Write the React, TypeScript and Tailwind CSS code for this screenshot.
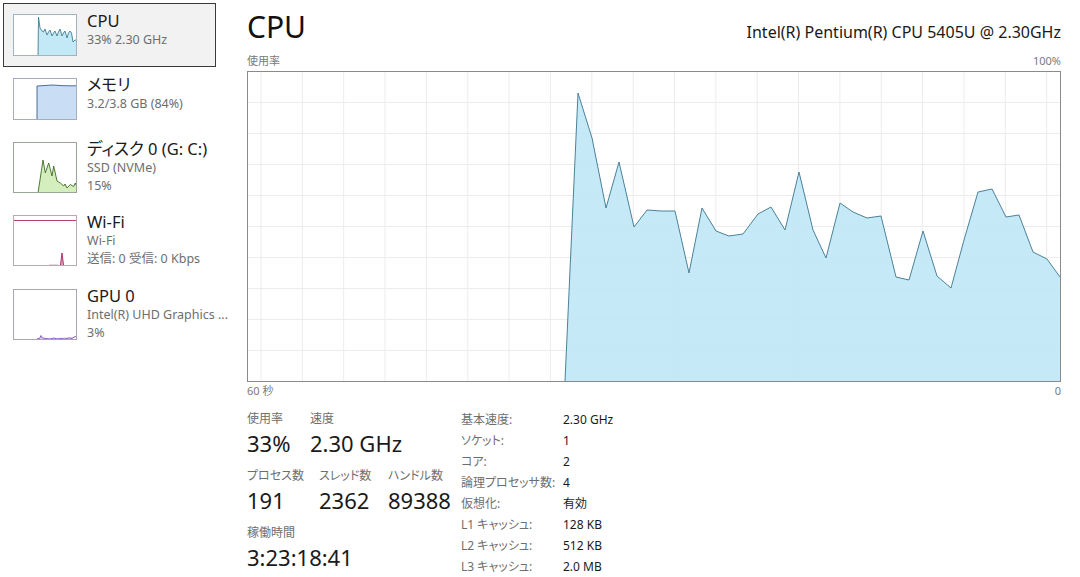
import React from "react";

const FONT = '"Noto Sans", "Noto Sans CJK JP", sans-serif';

// CPU usage history, in chart pixels (812 x 309 inner area)
const cpuPoints: [number, number][] = [
  [317, 309], [330, 21], [344, 66], [358, 136], [371, 90], [386, 155],
  [399, 138], [413, 139], [427, 139], [441, 201], [454, 136], [468, 159],
  [481, 164], [495, 162], [510, 142], [523, 135], [537, 158], [551, 100],
  [565, 158], [578, 186], [592, 131], [605, 140], [619, 146], [633, 144],
  [648, 205], [661, 208], [675, 159], [689, 204], [703, 216], [716, 168],
  [730, 120], [744, 117], [758, 145], [771, 143], [785, 180], [799, 187],
  [812, 205]
];

function CpuChart() {
  const line = cpuPoints.map(p => p.join(",")).join(" ");
  const area = `${line} 812,309`;
  const vLines = Array.from({ length: 20 }, (_, i) => 13 + i * 41.35);
  const hLines = Array.from({ length: 9 }, (_, i) => 31 * (i + 1) - 1);
  return (
    <svg width="812" height="309" viewBox="0 0 812 309" className="block">
      {vLines.map(x => (
        <line key={x} x1={x} y1={0} x2={x} y2={309} stroke="#ececec" strokeWidth="1" />
      ))}
      {hLines.map(y => (
        <line key={y} x1={0} y1={y + 0.5} x2={812} y2={y + 0.5} stroke="#ececec" strokeWidth="1" />
      ))}
      <polygon points={area} fill="#bfe7f6" fillOpacity="0.9" />
      <polyline points={line} fill="none" stroke="#4a8299" strokeWidth="1" strokeLinejoin="round" />
    </svg>
  );
}

function Thumb({
  h,
  border,
  children
}: {
  h: number;
  border: string;
  children: React.ReactNode;
}) {
  return (
    <svg
      width="64"
      height={h}
      viewBox={`0 0 64 ${h}`}
      className="block shrink-0 mt-[3px] bg-white"
    >
      {children}
      <rect x="0.5" y="0.5" width="63" height={h - 1} fill="none" stroke={border} />
    </svg>
  );
}

function SideItem({
  title,
  lines,
  thumb,
  selected,
  height
}: {
  title: string;
  lines: string[];
  thumb: React.ReactNode;
  selected?: boolean;
  height: string;
}) {
  return (
    <div
      className={
        selected
          ? `flex w-[213px] ${height} border border-[#3a3a3a] bg-[#f2f2f2] pl-[9px] pt-[7px]`
          : `flex w-[213px] ${height} border border-transparent pl-[9px] pt-[7px]`
      }
    >
      {thumb}
      <div className="ml-[10px] flex flex-col whitespace-nowrap">
        <div className="text-[16.5px] leading-[20px] text-[#1a1a1a]">{title}</div>
        {lines.map(l => (
          <div key={l} className="text-[12.5px] leading-[18px] text-[#6e6e6e]">
            {l}
          </div>
        ))}
      </div>
    </div>
  );
}

function Stat({ label, value, w }: { label: string; value: string; w: string }) {
  return (
    <div className={`${w} flex flex-col`}>
      <div className="text-[12px] leading-[18px] text-[#6e6e6e] whitespace-nowrap">{label}</div>
      <div className="text-[22px] leading-[30px] text-[#1a1a1a] whitespace-nowrap">{value}</div>
    </div>
  );
}

const details: [string, string][] = [
  ["基本速度:", "2.30 GHz"],
  ["ソケット:", "1"],
  ["コア:", "2"],
  ["論理プロセッサ数:", "4"],
  ["仮想化:", "有効"],
  ["L1 キャッシュ:", "128 KB"],
  ["L2 キャッシュ:", "512 KB"],
  ["L3 キャッシュ:", "2.0 MB"]
];

export default function App() {
  return (
    <div
      className="flex w-[1080px] h-[577px] bg-white overflow-hidden [font-feature-settings:'palt']"
      style={{ fontFamily: FONT }}
    >
      {/* Sidebar */}
      <div className="w-[220px] shrink-0 flex flex-col pt-[3px] pl-[3px]">
        <SideItem
          selected
          height="h-[64px]"
          title="CPU"
          lines={["33%  2.30 GHz"]}
          thumb={
            <Thumb h={42} border="#9fb4bf">
              <polygon
                points="25,42 25.5,3 27,14 29,17 30.5,18 32,15 34,21 35.5,18 37,16 39,22 40.5,19 42,17 44,22 45.5,18 47,15 49,22 50.5,19 52,17 54,24 55.5,19 57,17 58.5,19 60,28 62,26 63,26 63,42"
                fill="#c3e8f6"
              />
              <polyline
                points="25,42 25.5,3 27,14 29,17 30.5,18 32,15 34,21 35.5,18 37,16 39,22 40.5,19 42,17 44,22 45.5,18 47,15 49,22 50.5,19 52,17 54,24 55.5,19 57,17 58.5,19 60,28 62,26 63,26"
                fill="none"
                stroke="#3f7f95"
                strokeWidth="0.9"
              />
            </Thumb>
          }
        />
        <SideItem
          height="h-[64px]"
          title="メモリ"
          lines={["3.2/3.8 GB (84%)"]}
          thumb={
            <Thumb h={42} border="#a3adbd">
              <polygon points="24,42 24,8 32,7.5 40,7 48,7.6 56,7.8 63,7.8 63,42" fill="#c9ddf5" />
              <polyline
                points="24,42 24,8 32,7.5 40,7 48,7.6 56,7.8 63,7.8"
                fill="none"
                stroke="#3d5f8a"
                strokeWidth="0.9"
              />
            </Thumb>
          }
        />
        <SideItem
          height="h-[73px]"
          title="ディスク 0 (G: C:)"
          lines={["SSD (NVMe)", "15%"]}
          thumb={
            <Thumb h={51} border="#9aa597">
              <polygon
                points="25,51 30,18 32.3,31 35.7,21 39,34 40.7,24 44,39 47.3,41 50.7,44 52,42 54,46 57.3,42.5 60.7,44.5 62.3,41 63,43 63,51"
                fill="#d4efbd"
              />
              <polyline
                points="25,51 30,18 32.3,31 35.7,21 39,34 40.7,24 44,39 47.3,41 50.7,44 52,42 54,46 57.3,42.5 60.7,44.5 62.3,41 63,43"
                fill="none"
                stroke="#3e6b22"
                strokeWidth="0.9"
              />
            </Thumb>
          }
        />
        <SideItem
          height="h-[74px]"
          title="Wi-Fi"
          lines={["Wi-Fi", "送信: 0  受信: 0 Kbps"]}
          thumb={
            <Thumb h={51} border="#b8a9b2">
              <line x1="1" y1="5.5" x2="63" y2="5.5" stroke="#b2436e" strokeWidth="1" />
              <polygon points="47.5,50 49,38 50.5,50" fill="#e8a3c0" />
              <polyline points="47.5,50 49,38 50.5,50" fill="none" stroke="#a8205a" strokeWidth="0.9" />
              <line x1="36" y1="50" x2="45" y2="50" stroke="#b9a2ad" strokeWidth="0.8" />
            </Thumb>
          }
        />
        <SideItem
          height="h-[74px]"
          title="GPU 0"
          lines={["Intel(R) UHD Graphics ...", "3%"]}
          thumb={
            <Thumb h={51} border="#a9a7b6">
              <polyline
                points="24,50 27,49 28,46.5 29.5,49 33,49.5 37,50 41,49 44,50 48,49.5 52,50 56,49 59,49.5 62,47.5 63,48"
                fill="#d8c8ee"
                stroke="#8a4fc0"
                strokeWidth="0.9"
              />
            </Thumb>
          }
        />
      </div>

      {/* Main panel */}
      <div className="flex-1 flex flex-col pl-[27px] pr-[19px]">
        <div className="flex items-baseline justify-between h-[47px] pt-[9px]">
          <div className="text-[30px] leading-[36px] text-[#111]">CPU</div>
          <div className="text-[16px] leading-[20px] text-[#1a1a1a]">
            Intel(R) Pentium(R) CPU 5405U @ 2.30GHz
          </div>
        </div>
        <div className="flex justify-between text-[11px] leading-[16px] text-[#7a7a7a] mt-[6px]">
          <span>使用率</span>
          <span>100%</span>
        </div>
        <div className="mt-[2px] w-[814px] h-[311px] border border-[#8a8a8a]">
          <CpuChart />
        </div>
        <div className="flex justify-between text-[11px] leading-[18px] text-[#7a7a7a]">
          <span>60 秒</span>
          <span>0</span>
        </div>

        <div className="flex mt-[10px]">
          <div className="w-[214px] flex flex-col gap-[9px]">
            <div className="flex">
              <Stat w="w-[63px]" label="使用率" value="33%" />
              <Stat w="w-[120px]" label="速度" value="2.30 GHz" />
            </div>
            <div className="flex">
              <Stat w="w-[72px]" label="プロセス数" value="191" />
              <Stat w="w-[69px]" label="スレッド数" value="2362" />
              <Stat w="w-[72px]" label="ハンドル数" value="89388" />
            </div>
            <div className="flex">
              <Stat w="w-[200px]" label="稼働時間" value="3:23:18:41" />
            </div>
          </div>
          <div className="flex flex-col -mt-[1px]">
            {details.map(([k, v]) => (
              <div key={k} className="flex text-[12px] leading-[21px]">
                <span className="w-[102px] text-[#6e6e6e] whitespace-nowrap">{k}</span>
                <span className="text-[#1a1a1a]">{v}</span>
              </div>
            ))}
          </div>
        </div>
      </div>
    </div>
  );
}
